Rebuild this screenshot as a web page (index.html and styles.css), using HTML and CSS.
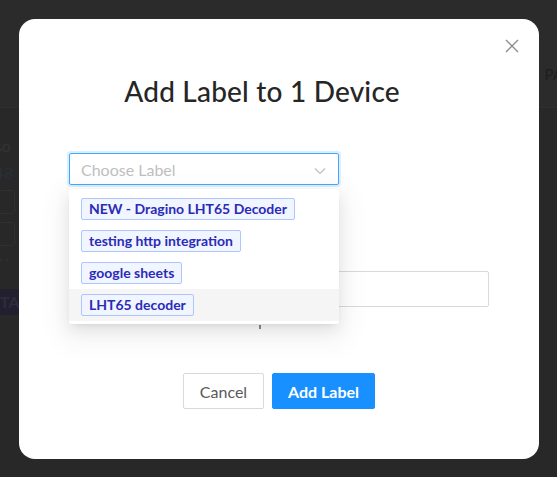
FILE: index.html
```html
<!DOCTYPE html>
<html>
<head>
<meta charset="utf-8">
<link rel="stylesheet" href="styles.css">
</head>
<body>
<div class="backdrop">
  <div class="bg-header"><span class="bg-pa">PA</span></div>
  <div class="bg-body">
    <div class="bg-text">nso</div>
    <div class="bg-link">e48</div>
    <div class="bg-box"></div>
    <div class="bg-box"></div>
    <div class="bg-stars">****</div>
    <div class="bg-tag">TAA</div>
  </div>
</div>
<div class="overlay">
  <div class="modal">
    <button class="close" aria-label="Close">
      <svg width="14" height="14" viewBox="0 0 14 14"><path d="M1 1L13 13M13 1L1 13" stroke="#8c8c8c" stroke-width="1.3" fill="none"/></svg>
    </button>
    <h1 class="title">Add Label to 1 Device</h1>
    <div class="field">
      <div class="select">
        <span class="placeholder">Choose Label</span>
        <svg class="chevron" width="12" height="8" viewBox="0 0 12 8"><path d="M1 1.5L6 6.5L11 1.5" stroke="#bfbfbf" stroke-width="1.2" fill="none"/></svg>
      </div>
      <div class="dropdown">
        <div class="option"><span class="tag">NEW - Dragino LHT65 Decoder</span></div>
        <div class="option"><span class="tag">testing http integration</span></div>
        <div class="option"><span class="tag">google sheets</span></div>
        <div class="option active"><span class="tag">LHT65 decoder</span></div>
      </div>
    </div>
    <div class="new-label">
      <div class="input"></div>
      <div class="hint"><span class="hint-mark"></span></div>
    </div>
    <div class="actions">
      <button class="btn btn-default">Cancel</button>
      <button class="btn btn-primary">Add Label</button>
    </div>
  </div>
</div>
</body>
</html>
```
FILE: styles.css
```css
* { box-sizing: border-box; }
html, body { margin: 0; padding: 0; }
body {
  width: 557px;
  height: 477px;
  overflow: hidden;
  background: #282828;
  font-family: Lato, "Noto Sans", sans-serif;
  position: relative;
}
.backdrop {
  height: 100%;
  display: flex;
  flex-direction: column;
}
.bg-header {
  height: 108px;
  background: #2b2b2b;
  border-bottom: 1px solid #2f2f2f;
  display: flex;
  justify-content: flex-end;
  align-items: center;
}
.bg-pa {
  color: #1e1e1e;
  font-size: 15px;
  margin-right: -6px;
  margin-top: 40px;
}
.bg-body {
  padding-top: 28px;
  display: flex;
  flex-direction: column;
  gap: 8px;
  margin-left: -14px;
}
.bg-text { color: #333; font-size: 16px; }
.bg-link { color: #283039; font-size: 16px; }
.bg-box { width: 25px; height: 24px; border: 1px solid #303030; border-radius: 3px; margin-left: 4px; }
.bg-stars { color: #2b303c; font-size: 14px; }
.bg-tag { margin-top: 10px; background: #221f2e; color: #302c40; font-weight: bold; font-size: 16px; height: 26px; width: 60px; padding-left: 14px; line-height: 26px; }

.overlay {
  position: absolute;
  inset: 0;
  padding: 19px 18px 18px 19px;
}
.modal {
  position: relative;
  width: 520px;
  height: 440px;
  background: #fff;
  border-radius: 16px;
  padding: 55px 50px 0 50px;
  display: flex;
  flex-direction: column;
}
.close {
  position: absolute;
  top: 20px;
  right: 20px;
  width: 14px;
  height: 14px;
  padding: 0;
  border: 0;
  background: none;
  line-height: 0;
}
.title {
  margin: 0;
  font-size: 28px;
  font-weight: 500;
  color: #262626;
  text-align: center;
  line-height: 34px;
  padding-right: 34px;
  letter-spacing: 0.2px;
}
.field {
  position: relative;
  margin-top: 45px;
  width: 270px;
}
.select {
  height: 32px;
  border: 1px solid #40a9ff;
  border-radius: 2px;
  box-shadow: 0 0 0 2px rgba(24,144,255,0.15);
  display: flex;
  align-items: center;
  justify-content: space-between;
  padding: 0 12px 0 11px;
}
.placeholder {
  color: #bfbfbf;
  font-size: 16px;
}
.chevron { margin-top: 4px; }
.dropdown {
  position: absolute;
  top: 36px;
  left: 0;
  width: 270px;
  background: #fff;
  border-radius: 2px;
  padding: 4px 0 3px;
  z-index: 2;
  box-shadow: 0 3px 6px -4px rgba(0,0,0,0.12), 0 6px 16px 0 rgba(0,0,0,0.08), 0 9px 28px 8px rgba(0,0,0,0.05);
}
.option {
  height: 32px;
  display: flex;
  align-items: center;
  padding: 0 12px;
}
.option.active { background: #f5f5f5; }
.tag {
  height: 22px;
  line-height: 20px;
  padding: 0 7px;
  border: 1px solid #adc6ff;
  background: #f0f5ff;
  color: #2a2bb8;
  font-size: 14px;
  font-weight: bold;
  border-radius: 2px;
  white-space: nowrap;
}
.new-label {
  margin-top: 86px;
}
.input {
  height: 36px;
  border: 1px solid #d9d9d9;
  border-radius: 2px;
}
.hint {
  height: 22px;
  padding-left: 190px;
  padding-top: 18px;
}
.hint-mark {
  display: block;
  width: 2px;
  height: 4px;
  background: #8c8c8c;
}
.actions {
  margin-top: 44px;
  display: flex;
  justify-content: center;
  gap: 8px;
}
.btn {
  height: 36px;
  font-family: inherit;
  font-size: 16px;
  border-radius: 2px;
  padding: 0;
  white-space: nowrap;
  cursor: pointer;
}
.btn-default {
  width: 81px;
  background: #fff;
  border: 1px solid #d9d9d9;
  color: #595959;
}
.btn-primary {
  width: 103px;
  background: #1890ff;
  border: 1px solid #1890ff;
  color: #fff;
  font-weight: bold;
}
```
